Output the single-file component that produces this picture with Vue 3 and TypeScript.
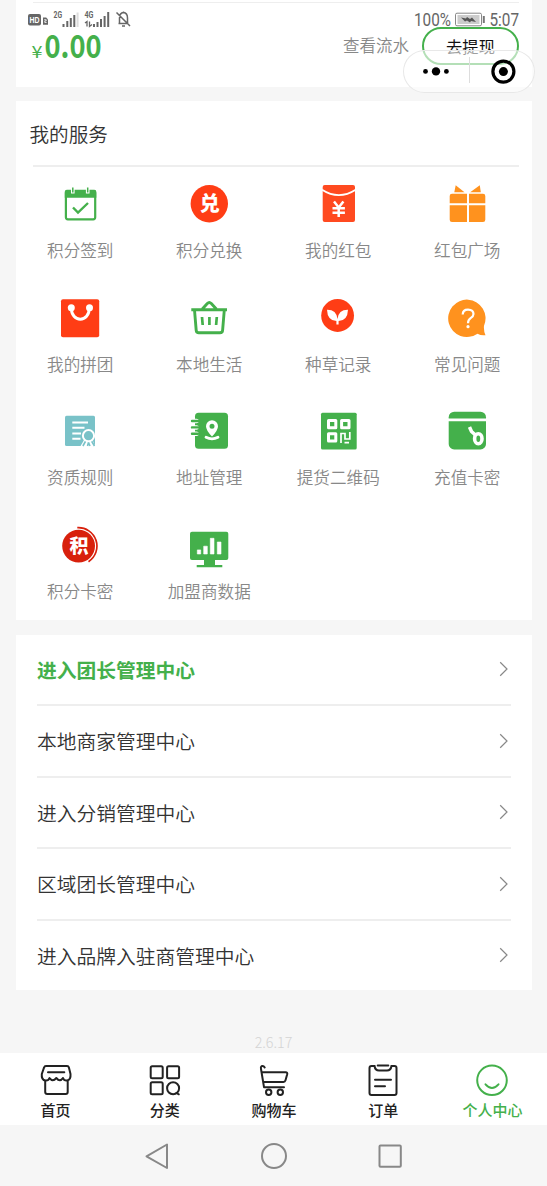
<script setup lang="ts">
interface Service { icon: string; label: string }

const services: Service[] = [
  { icon: 'checkin', label: '积分签到' },
  { icon: 'exchange', label: '积分兑换' },
  { icon: 'envelope', label: '我的红包' },
  { icon: 'gift', label: '红包广场' },
  { icon: 'bag', label: '我的拼团' },
  { icon: 'basket', label: '本地生活' },
  { icon: 'sprout', label: '种草记录' },
  { icon: 'question', label: '常见问题' },
  { icon: 'license', label: '资质规则' },
  { icon: 'address', label: '地址管理' },
  { icon: 'qrcode', label: '提货二维码' },
  { icon: 'cardkey', label: '充值卡密' },
  { icon: 'points', label: '积分卡密' },
  { icon: 'monitor', label: '加盟商数据' },
]

const links: string[] = [
  '进入团长管理中心',
  '本地商家管理中心',
  '进入分销管理中心',
  '区域团长管理中心',
  '进入品牌入驻商管理中心',
]

const tabs: Service[] = [
  { icon: 'home', label: '首页' },
  { icon: 'category', label: '分类' },
  { icon: 'cart', label: '购物车' },
  { icon: 'order', label: '订单' },
  { icon: 'me', label: '个人中心' },
]
</script>

<template>
  <div class="page">
    <svg class="status" width="547" height="32" viewBox="0 0 547 32">
      <rect x="28" y="14" width="13" height="11.5" rx="2" fill="#666" />
      <text x="29.6" y="22.8" class="hd" textLength="10" lengthAdjust="spacingAndGlyphs">HD</text>
      <path d="M43 17.5h3.2l1.8 2v5.2h-5z" fill="#666" />
      <path d="M44.2 19.7h2v1.2h-1.4v1.6h1.8" fill="none" stroke="#fff" stroke-width=".8" />
      <text x="53.5" y="18.3" class="net" textLength="8.5" lengthAdjust="spacingAndGlyphs">2G</text>
      <path d="M63.5 27v-3M67.3 27v-6M70.8 27v-9M74.3 27v-12" class="bars" />
      <path d="M77.6 27v-14.500" stroke="#ddd" stroke-width="2" />
      <text x="84.500" y="18.3" class="net" textLength="9" lengthAdjust="spacingAndGlyphs">4G</text>
      <path d="M85 23l2-1.500v5M89.500 21.500v5l2.500-2" fill="none" stroke="#666" stroke-width="1.3" />
      <path d="M94 27v-3M97.500 27v-5M101 27v-8M104.600 27v-11M108.200 27v-15" class="bars" />
      <path d="M118.500 23.500h10M119.500 23v-5q0-5 4-5.500 4 .5 4 5.500v5M123.500 12.500v-1M122 26h3M116.500 12.500l13.500 13.500" fill="none" stroke="#666" stroke-width="1.500" />
      <text x="414" y="26.300" class="sys" textLength="37" lengthAdjust="spacingAndGlyphs">100%</text>
      <rect x="455.500" y="13.200" width="26" height="12.600" rx="1.500" fill="#fff" stroke="#888" />
      <rect x="457.500" y="15" width="22" height="9" fill="#ccc" />
      <path d="M461 17.500l5 1 1-1.500 3 2 2-1.500 4 4.500-5-1-1 1.500-3-2-2 1z" fill="#555" />
      <path d="M483.800 16v7" stroke="#777" stroke-width="2" />
      <text x="489.500" y="26.300" class="sys" textLength="29.500" lengthAdjust="spacingAndGlyphs">5:07</text>
    </svg>

    <div class="capsule">
      <svg width="132" height="43" viewBox="403 50 132 43">
        <circle cx="425.500" cy="71.400" r="2.400" /><circle cx="436" cy="71.400" r="4.200" /><circle cx="446.400" cy="71.400" r="2.400" />
        <path d="M469.500 57v26" stroke="#ddd" />
        <circle cx="503.400" cy="71.600" r="10.500" fill="none" stroke="#000" stroke-width="3.200" />
        <circle cx="503.400" cy="71.600" r="4.500" />
      </svg>
    </div>

    <section class="card wallet">
      <svg class="amount" width="80" height="58" viewBox="28 19 80 58">
        <text x="31.500" y="57.500" class="yen" textLength="11" lengthAdjust="spacingAndGlyphs">¥</text>
        <text x="44.500" y="58" class="sum" textLength="57" lengthAdjust="spacingAndGlyphs">0.00</text>
      </svg>
      <span class="flow">查看流水</span>
      <button class="withdraw">去提现</button>
    </section>

    <section class="card services">
      <h2>我的服务</h2>
      <div class="grid">
        <div v-for="s in services" :key="s.icon" class="service">
          <svg width="48" height="48" viewBox="0 0 48 48">
            <template v-if="s.icon === 'checkin'">
              <rect x="9.900" y="11" width="29.300" height="28.300" rx="2" fill="#fff" stroke="#44b04b" stroke-width="2.200" />
              <path d="M8.800 17.800v-6q0-2 2-2h27.500q2 0 2 2v6z" fill="#44b04b" />
              <path d="M16.800 6.500v7M31.700 6.500v7" stroke="#fff" stroke-width="3.600" />
              <path d="M16.800 7.500v5M31.700 7.500v5" stroke="#44b04b" stroke-width="1.500" />
              <path d="M17 27.500l5 5L32 23" fill="none" stroke="#44b04b" stroke-width="2.400" />
            </template>
            <template v-else-if="s.icon === 'exchange'">
              <circle cx="24.300" cy="23.700" r="18.700" fill="#ff3d15" />
              <text x="24.700" y="31" class="glyph exchange">兑</text>
            </template>
            <template v-else-if="s.icon === 'envelope'">
              <rect x="8.700" y="5" width="32.300" height="37" rx="2" fill="#ff4a20" />
              <path d="M8 9.800Q24.800 20.500 41.700 9.800" fill="none" stroke="#fff" stroke-width="1.900" />
              <path d="M20 21.500l4.700 6 4.700-6M24.700 27v10M18.500 28.200h12.400M18.500 32.800h12.400" fill="none" stroke="#fff" stroke-width="2.500" />
            </template>
            <template v-else-if="s.icon === 'gift'">
              <path d="M12.700 5.300l8.800 7H11.300zM36.800 5.300l-9.600 7h10.600z" fill="#ff921e" />
              <path d="M9 13.700h15v9.600H6.700V16q0-2.300 2.300-2.300zM26 13.700h14q2.300 0 2.300 2.300v7.300H26zM6.700 25.300H24V42H9q-2.300 0-2.300-2.300zM26 25.300h16.300v14.400q0 2.300-2.300 2.300H26z" fill="#ff921e" />
            </template>
            <template v-else-if="s.icon === 'bag'">
              <rect x="5" y="5.300" width="38.200" height="38" rx="2" fill="#ff3d15" />
              <path d="M15.300 13.500C15 29 33.600 29 33.300 13.500" fill="none" stroke="#fff" stroke-width="3" />
              <circle cx="15.300" cy="13.700" r="3.500" fill="#fff" /><circle cx="33.500" cy="13.700" r="3.500" fill="#fff" />
            </template>
            <template v-else-if="s.icon === 'basket'">
              <path d="M6.300 15.800H42M9.500 16l1.700 20.300q.2 2.400 2.600 2.400h21.200q2.400 0 2.600-2.400L39.300 16M17.300 15l5-5.500q2-2 4 0l5 5.500" fill="none" stroke="#44b04b" stroke-width="2.900" />
              <path d="M17 23l.7 8M24.400 23v8M31.800 23l-.7 8" stroke="#44b04b" stroke-width="2.700" />
            </template>
            <template v-else-if="s.icon === 'sprout'">
              <circle cx="23.600" cy="21.500" r="16.400" fill="#ff3d15" />
              <path d="M13 15.700Q22.500 15.500 23.500 25 24.500 15.500 34 15.700 33.600 26.600 24.600 27V30.500h-2.200V27Q13.400 26.600 13 15.700z" fill="#fff" />
            </template>
            <template v-else-if="s.icon === 'question'">
              <path d="M41 31.800Q40.500 37 42.500 41.200 38 41.800 34.500 39.700A18.700 18.700 0 1 1 41 31.800z" fill="#ff921e" />
              <path d="M19.700 20.500Q19.800 15.600 25 15.600 30.500 15.700 30.500 20 30.500 22.300 27.600 24.200 25 26 25 29.300" fill="none" stroke="#fff" stroke-width="2.200" />
              <circle cx="25" cy="32.700" r="1.600" fill="#fff" />
            </template>
            <template v-else-if="s.icon === 'license'">
              <rect x="9" y="8.700" width="30" height="30.300" rx="1.500" fill="#79c2c8" />
              <path d="M16.300 15.400H32M16.300 20.800H28.500M16.300 26.400H25M16.300 31.700H24.500" stroke="#fff" stroke-width="2" />
              <path d="M28 33l-4 7h15.500l-3-7z" fill="#fff" />
              <path d="M29.700 34l-2.800 5M31.500 39l1-3.500 1.500 3.500M35.500 34l3 5" fill="none" stroke="#79c2c8" stroke-width="1.600" />
              <circle cx="32.500" cy="28.700" r="5.600" fill="#79c2c8" stroke="#fff" stroke-width="2" />
            </template>
            <template v-else-if="s.icon === 'address'">
              <rect x="10" y="5.700" width="33" height="36" rx="3.500" fill="#44b04b" />
              <path d="M9 14h2.500M9 20.400h2.500M9 26.700h2.500" stroke="#fff" stroke-width="4.500" stroke-linecap="round" />
              <path d="M7 14h6M7 20.400h6M7 26.700h6" stroke="#44b04b" stroke-width="2.400" stroke-linecap="round" />
              <path fill-rule="evenodd" d="M27 29.500Q21 23.500 21 19.300a6 6 0 0 1 12 0Q33 23.500 27 29.500zM27 16.800a2.500 2.500 0 1 0 0 5 2.500 2.500 0 0 0 0-5z" fill="#fff" />
              <path d="M21 30.300Q27 33.500 33 30.300" fill="none" stroke="#fff" stroke-width="2.800" stroke-linecap="round" />
            </template>
            <template v-else-if="s.icon === 'qrcode'">
              <rect x="7" y="5.700" width="35.700" height="36.700" rx="1.500" fill="#44b04b" />
              <path d="M14.500 13.500h7.300v7.300h-7.300zM27.600 13.500H35v7.300h-7.400zM14.500 26.700h7.300V34h-7.300z" fill="none" stroke="#fff" stroke-width="3" stroke-linejoin="round" />
              <path d="M27 36v-9.500h4v5.500h4.800v-7M30.500 35.600h4.500" fill="none" stroke="#fff" stroke-width="1.700" />
            </template>
            <template v-else-if="s.icon === 'cardkey'">
              <rect x="5.700" y="4.700" width="37.300" height="37.700" rx="5.500" fill="#44b04b" />
              <path d="M5 12.900h39" stroke="#fff" stroke-width="2.700" />
              <path d="M26.500 20l2 4.500 4.500 4" fill="none" stroke="#fff" stroke-width="3.500" />
              <ellipse cx="35.300" cy="31.700" rx="3.700" ry="5" fill="#44b04b" stroke="#fff" stroke-width="3.600" />
            </template>
            <template v-else-if="s.icon === 'points'">
              <circle cx="22.600" cy="25.100" r="16.400" fill="#d8200c" />
              <path d="M21.300 6.700A18.500 18.500 0 0 1 32.500 40.700" fill="none" stroke="#d8200c" stroke-width="1.700" />
              <text x="23" y="32" class="glyph points">积</text>
            </template>
            <template v-else>
              <rect x="5" y="10.700" width="38.300" height="28.300" rx="2" fill="#44b04b" />
              <path d="M19 38.500h11v5.500h-11zM11.700 44h25.600v2.200H11.700z" fill="#44b04b" />
              <path d="M12.300 28.900h3.400V33h-3.400zM18.700 25.200h3.600v7.800h-3.600zM25.300 17.300h3.700V33h-3.700zM32.300 21h3.700v12h-3.700z" fill="#fff" stroke="#fff" stroke-width=".6" stroke-linejoin="round" />
            </template>
          </svg>
          <span>{{ s.label }}</span>
        </div>
      </div>
    </section>

    <section class="card links">
      <div v-for="(l, i) in links" :key="l" class="link" :class="{ strong: i === 0 }">
        <span>{{ l }}</span>
        <svg width="10" height="16" viewBox="0 0 10 16"><path d="M1.200 1.300L8 8l-6.800 6.700" fill="none" stroke="#888" stroke-width="1.200" /></svg>
      </div>
    </section>

    <div class="version">2.6.17</div>

    <nav class="tabs">
      <div v-for="t in tabs" :key="t.icon" class="tab" :class="{ active: t.icon === 'me' }">
        <svg width="36" height="36" viewBox="0 0 36 36">
          <template v-if="t.icon === 'home'">
            <path d="M8 3.900h21q1.500 0 1.900 1.500L32.500 12q.5 6-3.500 6.500-3 .3-4-2.500-3 4.500-6.700 0-3.700 4.500-6.800 0-1 2.800-4 2.500-4.300-.5-3.700-6.500L6.100 5.400Q6.500 3.900 8 3.900zM7.200 18.500V30q0 2 2 2h18.500q2 0 2-2V18.500M10 10.300h16.300" />
          </template>
          <template v-else-if="t.icon === 'category'">
            <rect x="3.700" y="4.300" width="12" height="12" rx="1.500" /><rect x="20.100" y="4.300" width="12" height="12" rx="1.500" /><rect x="3.700" y="20.300" width="12" height="12" rx="1.500" />
            <circle cx="26.100" cy="26.300" r="6" /><path d="M29.500 31l2.300 1.300" />
          </template>
          <template v-else-if="t.icon === 'cart'">
            <path d="M8.700 5.500Q7.500 3.500 5.500 4.300 4.500 5 5 7l3 18.200h20M5.700 10.300h24q2 0 1.500 2l-1.700 6q-.5 1.700-2 1.700H7.300" />
            <circle cx="12.700" cy="30.300" r="2.700" /><circle cx="24.300" cy="30.300" r="2.700" />
          </template>
          <template v-else-if="t.icon === 'order'">
            <path d="M12.700 3.500h10.600M9.700 4H6.500Q4.500 4 4.500 6v25q0 2 2 2h23q2 0 2-2V6q0-2-2-2h-3.200M9.500 4q.7 4.500 4.500 4.500h8Q25.800 8.500 26.500 4M10 17.800h16M10 24.200h10" />
          </template>
          <template v-else>
            <circle cx="18" cy="18.300" r="14.800" /><path d="M11.500 22.300Q18 29.500 24.500 22.300" />
          </template>
        </svg>
        <span>{{ t.label }}</span>
      </div>
    </nav>

    <svg class="sysnav" width="547" height="61" viewBox="0 1125 547 61">
      <path d="M146.500 1156.300L167 1144.500v23.500z" /><circle cx="274" cy="1156" r="12" /><rect x="379.500" y="1145.500" width="21.300" height="21.300" rx="1" />
    </svg>
  </div>
</template>

<style>
body { margin: 0; }
</style>

<style scoped>
.page {
  position: relative;
  box-sizing: border-box;
  width: 547px;
  height: 1186px;
  overflow: hidden;
  display: flex;
  flex-direction: column;
  background: #f6f6f6;
  font-family: "Noto Sans CJK SC", sans-serif;
}
.status { position: absolute; left: 0; top: 0; z-index: 2; }
.hd { font: 700 8.500px "Liberation Sans", sans-serif; fill: #fff; }
.net { font: 700 9px Roboto, sans-serif; fill: #666; }
.sys { font: 400 18px Roboto, sans-serif; fill: #666; }
.bars { stroke: #666; stroke-width: 2; fill: none; }
.capsule {
  position: absolute;
  z-index: 3;
  left: 403px;
  top: 50px;
  box-sizing: border-box;
  width: 132px;
  height: 43px;
  border-radius: 22px;
  background: rgba(255, 255, 255, .6);
  box-shadow: inset 0 0 0 1px #e8e8e8;
}
.capsule svg { display: block; }
.card { box-sizing: border-box; flex: none; width: 516px; margin-left: 16px; background: #fff; }
.wallet { height: 87px; padding: 2px 13px 0 12px; display: flex; align-items: flex-start; background: linear-gradient(#eee, #eee) 17px 2px / 486px 1px no-repeat #fff; }
.amount { margin-top: 17px; }
.yen { font: 400 17px "Noto Sans CJK SC", sans-serif; fill: #44b04b; }
.sum { font: 700 32px "Noto Sans CJK SC", sans-serif; fill: #44b04b; }
.flow { margin: 33px 0 0 auto; font-size: 16.500px; line-height: 20px; color: #888; font-weight: 350; }
.withdraw {
  box-sizing: border-box;
  width: 97px;
  height: 38px;
  margin: 25px 0 0 13px;
  padding: 0;
  border: 2px solid #44b04b;
  border-radius: 19px;
  background: #fff;
  color: #111;
  font: 400 16.300px/34px "Noto Sans CJK SC", sans-serif;
}
.services { height: 519px; margin-top: 14px; }
h2 { margin: 0 13px 0 17px; height: 64px; border-bottom: 2px solid #eee; font-size: 19.600px; font-weight: 350; line-height: 65px; color: #333; text-indent: -3.500px; }
.grid { display: grid; grid-template-columns: repeat(4, 129px); grid-auto-rows: 113.700px; padding-top: 13px; }
.service { display: flex; flex-direction: column; align-items: center; gap: 12px; margin-left: -.5px; }
.service svg { display: block; flex: none; }
.service span { font-size: 16.600px; line-height: 20px; font-weight: 350; color: #888; white-space: nowrap; }
.glyph { fill: #fff; text-anchor: middle; font-family: "Noto Sans CJK SC", sans-serif; font-weight: 900; }
.exchange { font-size: 20px; }
.points { font-size: 19px; }
.links { height: 355.500px; margin-top: 14.500px; padding: 0 21px; }
.link { box-sizing: border-box; height: 71.500px; display: flex; align-items: center; justify-content: space-between; border-bottom: 2px solid #eee; font-size: 19.750px; font-weight: 350; color: #333; }
.link:last-child { border-bottom-color: transparent; }
.link svg { margin-right: 2px; }
.link.strong { color: #44b04b; font-weight: 700; }
.version { flex: none; height: 63px; box-sizing: border-box; padding-top: 42px; text-align: center; font-size: 14.300px; line-height: 20px; font-weight: 300; color: #d4d4d4; }
.tabs { flex: none; box-sizing: border-box; height: 72px; padding-left: 1px; display: grid; grid-template-columns: repeat(5, 1fr); background: #fff; }
.tab { display: flex; flex-direction: column; align-items: center; padding-top: 9px; gap: 2px; color: #222; }
.tab svg { display: block; fill: none; stroke: currentColor; stroke-width: 2; stroke-linecap: round; stroke-linejoin: round; }
.tab span { font-size: 15px; line-height: 20px; font-weight: 500; }
.tab.active { color: #44b04b; }
.sysnav { flex: none; fill: none; stroke: #888; stroke-width: 2; stroke-linejoin: round; }
</style>
